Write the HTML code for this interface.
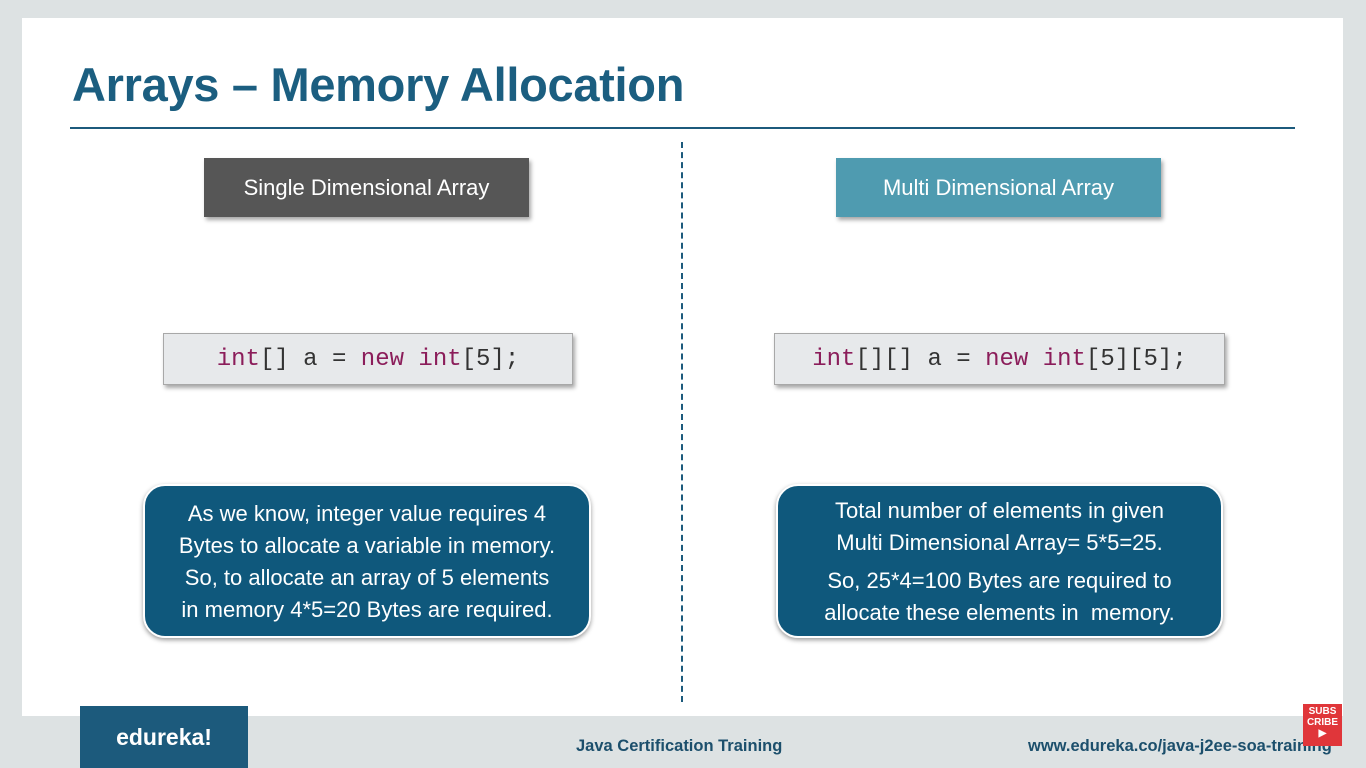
<!DOCTYPE html><html><head><style>
body{margin:0;width:1366px;height:768px;background:#dde2e3;position:relative;overflow:hidden;font-family:"Liberation Sans",sans-serif}
.a{position:absolute}
.slide{left:22px;top:18px;width:1321px;height:698px;background:#fff}
.title{left:72px;top:57px;font-size:47px;font-weight:bold;color:#1b5e80;white-space:nowrap;letter-spacing:-0.3px}
.hl{left:70px;top:127px;width:1225px;height:2px;background:#1c5a7c}
.dash{left:681px;top:142px;height:560px;border-left:2px dashed #1c5a7c}
.btn{height:59px;color:#fff;font-size:22px;display:flex;align-items:center;justify-content:center;box-shadow:2px 3px 4px rgba(0,0,0,.35)}
.code{height:50px;background:#e7e9eb;border:1px solid #a8a8a8;box-shadow:2px 3px 4px rgba(0,0,0,.35);font-family:"Liberation Mono",monospace;font-size:24px;color:#333;display:flex;align-items:center;justify-content:center}
.code div{white-space:pre}
.k{color:#8b1d5a}
.box{height:150px;background:#0f587c;border:2px solid #fff;border-radius:22px;box-shadow:0 2px 5px rgba(0,0,0,.4);color:#fff;font-size:22px;text-align:center;display:flex;flex-direction:column;justify-content:center;line-height:32px;padding-top:2px;box-sizing:content-box}
</style></head><body>
<div class="a slide"></div>
<div class="a title">Arrays – Memory Allocation</div>
<div class="a hl"></div>
<div class="a dash"></div>
<div class="a btn" style="left:204px;top:158px;width:325px;background:#565656">Single Dimensional Array</div>
<div class="a btn" style="left:836px;top:158px;width:325px;background:#4f9bb0">Multi Dimensional Array</div>
<div class="a code" style="left:163px;top:333px;width:408px"><div><span class="k">int</span>[] a = <span class="k">new</span> <span class="k">int</span>[5];</div></div>
<div class="a code" style="left:774px;top:333px;width:449px"><div><span class="k">int</span>[][] a = <span class="k">new</span> <span class="k">int</span>[5][5];</div></div>
<div class="a box" style="left:143px;top:484px;width:444px;height:148px"><div>As we know, integer value requires 4</div><div>Bytes to allocate a variable in memory.</div><div>So, to allocate an array of 5 elements</div><div>in memory 4*5=20 Bytes are required.</div></div>
<div class="a box" style="left:776px;top:484px;width:443px;height:148px"><div>Total number of elements in given</div><div>Multi Dimensional Array= 5*5=25.</div><div style="margin-top:6px">So, 25*4=100 Bytes are required to</div><div>allocate these elements in&nbsp; memory.</div></div>
<div class="a" style="left:80px;top:706px;width:168px;height:62px;background:#1c5a7c;color:#fff;font-size:23px;font-weight:bold;display:flex;align-items:center;justify-content:center">edureka!</div>
<div class="a" style="left:576px;top:737px;font-size:16.5px;font-weight:bold;color:#1c4f6c">Java Certification Training</div>
<div class="a" style="left:1028px;top:737px;font-size:16.5px;font-weight:bold;color:#1c4f6c">www.edureka.co/java-j2ee-soa-training</div>
<div class="a" style="left:1303px;top:704px;width:39px;height:40px;background:#e0363a;color:#fff;font-size:10px;font-weight:bold;line-height:11px;text-align:center;padding-top:2px">SUBS<br>CRIBE<br>▶</div>
</body></html>
